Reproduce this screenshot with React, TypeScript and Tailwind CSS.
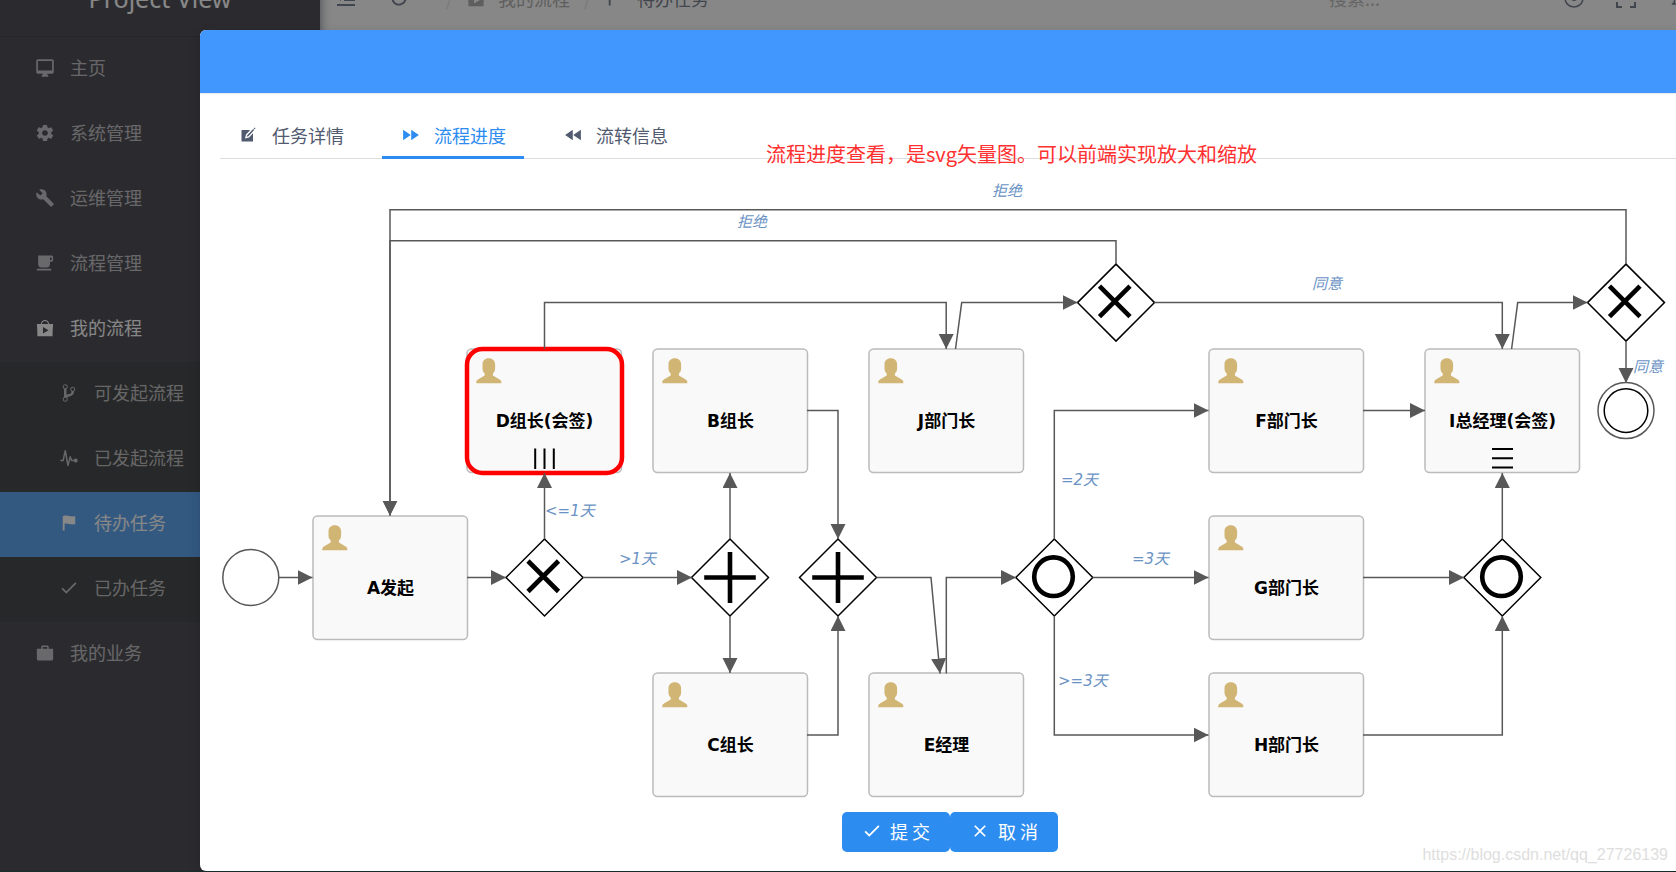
import React from "react";
import type { IconType } from "react-icons";
import {
  IoMdDesktop,
  IoMdSettings,
  IoMdBuild,
  IoMdCafe,
  IoMdAppstore,
  IoMdGitBranch,
  IoMdPulse,
  IoMdFlag,
  IoMdCheckmark,
  IoMdBriefcase,
  IoMdClose,
  IoMdRefresh,
  IoMdFastforward,
  IoMdRewind,
  IoMdNotificationsOutline,
} from "react-icons/io";

type Item = { label: string; icon: IconType };

const topItems: Item[] = [
  { label: "主页", icon: IoMdDesktop },
  { label: "系统管理", icon: IoMdSettings },
  { label: "运维管理", icon: IoMdBuild },
  { label: "流程管理", icon: IoMdCafe },
];

const subItems: (Item & { active?: boolean })[] = [
  { label: "可发起流程", icon: IoMdGitBranch },
  { label: "已发起流程", icon: IoMdPulse },
  { label: "待办任务", icon: IoMdFlag, active: true },
  { label: "已办任务", icon: IoMdCheckmark },
];

function MenuLink({ item, open }: { item: Item; open?: boolean }) {
  const Icon = item.icon;
  return (
    <a
      href="#"
      className={`flex h-[65px] items-center gap-[15px] pb-1 pl-[35px] ${open ? "text-white" : "text-[#ffffffaa]"}`}
    >
      <Icon size={20} />
      {item.label}
    </a>
  );
}

function Sidebar() {
  return (
    <aside className="z-10 w-80 shrink-0 bg-[#1b1a25] text-[18px] shadow-[2px_0_8px_rgba(0,21,41,0.5)]">
      <div className="flex h-[79px] items-center justify-center border-b border-[#101117] pt-1 font-['Noto_Sans','Noto_Sans_CJK_SC',sans-serif] text-[25px] text-white">
        Project View
      </div>
      <nav>
        {topItems.map((i) => (
          <MenuLink key={i.label} item={i} />
        ))}
        <MenuLink item={{ label: "我的流程", icon: IoMdAppstore }} open />
        <div className="bg-[#0f1214]">
          {subItems.map(({ label, icon: Icon, active }) => (
            <a
              key={label}
              href="#"
              className={`flex h-[65px] items-center gap-[15px] pb-1 pl-[59px] ${active ? "bg-[#2d8cf0] text-white" : "text-[#ffffffaa]"}`}
            >
              <Icon size={20} />
              {label}
            </a>
          ))}
        </div>
        <MenuLink item={{ label: "我的业务", icon: IoMdBriefcase }} />
      </nav>
    </aside>
  );
}

function TopBar() {
  return (
    <header className="flex h-20 items-center bg-white pl-4 text-[18px] text-[#515a6e]">
      <button aria-label="收起菜单" className="mr-8">
        <svg width="20" height="20" viewBox="0 0 20 20" fill="none" stroke="currentColor" strokeWidth="2">
          <path d="M1 3H19M8 8H19M8 12H19M1 17H19" />
          <path d="M5 7L1 10L5 13Z" fill="currentColor" stroke="none" />
        </svg>
      </button>
      <button aria-label="刷新" className="mr-9">
        <IoMdRefresh size={22} />
      </button>
      <nav aria-label="路径" className="flex items-center">
        <span className="w-[20px] text-[#dcdee2]">/</span>
        <a href="#" className="flex items-center gap-3 text-[#999]">
          <IoMdAppstore size={20} />
          我的流程
        </a>
        <span className="mx-[14px] text-[#dcdee2]">/</span>
        <span className="flex items-center gap-3">
          <IoMdFlag size={20} />
          待办任务
        </span>
      </nav>
      <input
        aria-label="搜索"
        placeholder="搜索..."
        className="mr-5 ml-auto w-[215px] bg-transparent placeholder:text-[#aaa]"
      />
      <button aria-label="主题" className="mr-8">
        <svg width="20" height="20" viewBox="0 0 20 20" fill="none" stroke="currentColor" strokeWidth="1.5">
          <circle cx="10" cy="10" r="9" />
          <circle cx="10" cy="10" r="3" fill="currentColor" stroke="none" />
        </svg>
      </button>
      <button aria-label="全屏" className="mr-8">
        <svg width="20" height="20" viewBox="0 0 20 20" fill="none" stroke="currentColor" strokeWidth="2">
          <path d="M1 6V1H6M14 1H19V6M19 14V19H14M6 19H1V14" />
        </svg>
      </button>
      <button aria-label="通知" className="-mr-4">
        <IoMdNotificationsOutline size={24} />
      </button>
    </header>
  );
}

const TOP = 349;
const MID = 516;
const LOW = 673;

const tasks: { x: number; y: number; name: string; mark?: "parallel" | "sequential"; current?: boolean }[] = [
  { x: 313, y: MID, name: "A发起" },
  { x: 467, y: TOP, name: "D组长(会签)", mark: "parallel", current: true },
  { x: 653, y: TOP, name: "B组长" },
  { x: 869, y: TOP, name: "J部门长" },
  { x: 1209, y: TOP, name: "F部门长" },
  { x: 1425, y: TOP, name: "I总经理(会签)", mark: "sequential" },
  { x: 1209, y: MID, name: "G部门长" },
  { x: 653, y: LOW, name: "C组长" },
  { x: 869, y: LOW, name: "E经理" },
  { x: 1209, y: LOW, name: "H部门长" },
];

const gateways: { x: number; y: number; kind: "x" | "plus" | "o" }[] = [
  { x: 544.5, y: 577.5, kind: "x" },
  { x: 730, y: 577.5, kind: "plus" },
  { x: 838, y: 577.5, kind: "plus" },
  { x: 1054.3, y: 577.5, kind: "o" },
  { x: 1502.3, y: 577.5, kind: "o" },
  { x: 1116, y: 302.6, kind: "x" },
  { x: 1626, y: 302.6, kind: "x" },
];

const flows = [
  "M279 577.5H312.5",
  "M467 577.5H506",
  "M544.5 539V473",
  "M583 577.5H692",
  "M544.5 349V302.6H946.2V349",
  "M955.5 349L961.7 302.6H1077.5",
  "M1154.3 302.6H1502.3V349",
  "M1511.6 349L1517.7 302.6H1587.5",
  "M1626 341V383",
  "M1626 264V209.7H390V515.5",
  "M1116 264V240.7H390V515.5",
  "M730 539V473",
  "M730 616V673",
  "M807 410.6H838V539",
  "M807 735H838V616",
  "M876.5 577.5H931L940 673.5",
  "M946.3 673.5V577.5H1016",
  "M1054.3 539V410.6H1208.5",
  "M1092.5 577.5H1208.5",
  "M1054.3 616V735H1208.5",
  "M1363 410.6H1425",
  "M1363 577.5H1464",
  "M1363 735H1502.3V616",
  "M1502.3 539V473",
];

const flowLabels: [number, number, string][] = [
  [992, 196, "拒绝"],
  [737, 227, "拒绝"],
  [1312, 289, "同意"],
  [1633, 372, "同意"],
  [545, 516, "<=1天"],
  [619, 564, ">1天"],
  [1061, 485, "=2天"],
  [1132, 564, "=3天"],
  [1058, 686, ">=3天"],
];

function ProcessDiagram() {
  return (
    <svg
      viewBox="220 159 1460 641"
      role="img"
      aria-label="流程进度"
      className="block h-auto w-full font-['DejaVu_Sans','Noto_Sans_CJK_SC',sans-serif]"
    >
      <defs>
        <marker id="arrow" markerUnits="userSpaceOnUse" markerWidth="16" markerHeight="16" refX="15" refY="7.5" orient="auto">
          <path d="M0 0L15 7.5L0 15Z" fill="#585858" />
        </marker>
      </defs>
      {tasks.map((t) => (
        <g key={t.name} transform={`translate(${t.x} ${t.y})`}>
          <rect width="154.5" height="123.5" rx="4.5" fill="#f9f9f9" stroke="#bbb" strokeWidth="1.5" />
          <path
            transform="translate(9.3 9.3)"
            fill="#d1b575"
            d="M12.5 0c3.8 0 6.3 2.5 6.3 6v4.2c0 2.2-.9 3.9-2.2 5v1.9L23 21q2 1.2 2 2.3V25H0v-1.7Q0 22.2 2 21l6.4-3.9v-1.9c-1.300-1.100-2.200-2.800-2.200-5V6c0-3.500 2.500-6 6.300-6z"
          />
          <text x="77.5" y="77.5" textAnchor="middle" className="fill-black text-[17px] font-bold">
            {t.name}
          </text>
          {t.mark === "parallel" && <path d="M68.2 99.5V120M77.5 99.5V120M86.8 99.5V120" stroke="#000" strokeWidth="2" />}
          {t.mark === "sequential" && <path d="M67 100H88M67 109.3H88M67 118.6H88" stroke="#000" strokeWidth="2" />}
          {t.current && <rect width="155" height="124" rx="15.5" fill="none" stroke="#f00" strokeWidth="4.5" />}
        </g>
      ))}
      <circle cx="250.8" cy="577.5" r="28" fill="#fff" stroke="#585858" strokeWidth="1.5" />
      <circle cx="1626" cy="410.6" r="28" fill="#fff" stroke="#585858" strokeWidth="1.5" />
      <circle cx="1626" cy="410.6" r="21.8" fill="none" stroke="#000" strokeWidth="1.5" />
      {gateways.map((g) => (
        <g key={`${g.x}-${g.y}`} transform={`translate(${g.x} ${g.y})`} fill="none" stroke="#000">
          <path d="M0-38.5L38.5 0L0 38.5L-38.5 0Z" fill="#fff" strokeWidth="1.5" />
          {g.kind === "x" && <path d="M-16.5-16.5L14 14M14-16.5L-16.5 14" strokeWidth="4.6" />}
          {g.kind === "plus" && <path d="M-25.8 0H25.8M0-25.5V25.5" strokeWidth="4.6" />}
          {g.kind === "o" && <circle cx="-.8" cy="-.8" r="19.3" strokeWidth="4.6" />}
        </g>
      ))}
      {flows.map((d) => (
        <path key={d} d={d} fill="none" stroke="#585858" strokeWidth="1.5" markerEnd="url(#arrow)" />
      ))}
      {flowLabels.map(([x, y, text]) => (
        <text key={`${x}-${y}`} x={x} y={y} className="fill-[#6a92c4] text-[15px] italic">
          {text}
        </text>
      ))}
    </svg>
  );
}

function EditSquareIcon() {
  return (
    <svg width="18" height="18" viewBox="0 0 18 18" fill="currentColor">
      <path d="M1.5 4H10.2L6 8.6L5 12.4L9 11.6L13 7.2V15.5H1.5Z" />
      <path d="M7.2 9.2L13.2 2.9L14.2 3.9L8.4 10.3L6.7 10.8Z" />
      <path d="M13.7 2.3L14.6 1.5L15.5 2.5L14.7 3.3Z" />
    </svg>
  );
}

const tabs = [
  { label: "任务详情", icon: <EditSquareIcon /> },
  { label: "流程进度", icon: <IoMdFastforward size={18} />, active: true },
  { label: "流转信息", icon: <IoMdRewind size={18} /> },
];

function TaskModal() {
  return (
    <section
      role="dialog"
      aria-label="流程进度"
      className="relative mt-[30px] -mr-6 ml-[200px] overflow-hidden rounded-md bg-white shadow-[0_4px_12px_rgba(0,0,0,0.15)]"
    >
      <div className="h-16 border-b border-[#e8eaec] bg-[#4297ff]" />
      <div className="px-5 pt-5 pb-[19px]">
        <div role="tablist" className="flex h-[45px] gap-5 border-b border-[#dcdee2] text-[18px] text-[#515a6e]">
          {tabs.map((t) => (
            <button
              key={t.label}
              role="tab"
              aria-selected={!!t.active}
              className={`-mb-px flex items-center gap-[14px] border-b-[3px] pr-[18px] pl-5 ${t.active ? "border-[#2d8cf0] text-[#2d8cf0]" : "border-transparent"}`}
            >
              {t.icon}
              {t.label}
            </button>
          ))}
        </div>
        <ProcessDiagram />
        <div className="mt-3 flex justify-center text-[18px] text-white">
          <button className="flex h-10 w-[108px] items-center justify-center gap-2 rounded-[5px] bg-[#2d8cf0] pb-0.5">
            <IoMdCheckmark size={20} />
            提 交
          </button>
          <button className="flex h-10 w-[108px] items-center justify-center gap-2 rounded-[5px] bg-[#2d8cf0] pb-0.5">
            <IoMdClose size={20} />
            取 消
          </button>
        </div>
      </div>
      <p className="absolute top-[110px] left-[566px] text-xl text-[#ff3030]">
        流程进度查看，是svg矢量图。可以前端实现放大和缩放
      </p>
      <span className="absolute right-8 bottom-1 font-['Liberation_Sans',sans-serif] text-base text-[#dedede]">
        https://blog.csdn.net/qq_27726139
      </span>
    </section>
  );
}

export default function App() {
  return (
    <div className="grid min-h-screen grid-cols-1 overflow-hidden font-['Noto_Sans_CJK_SC',sans-serif]">
      <div className="col-start-1 row-start-1 -mt-[42px] flex bg-[#f5f7f9]">
        <Sidebar />
        <div className="min-w-0 flex-1">
          <TopBar />
        </div>
      </div>
      <div className="relative z-20 col-start-1 row-start-1 min-w-0 border-b border-[#17302e] bg-[#373737]/60">
        <TaskModal />
      </div>
    </div>
  );
}
